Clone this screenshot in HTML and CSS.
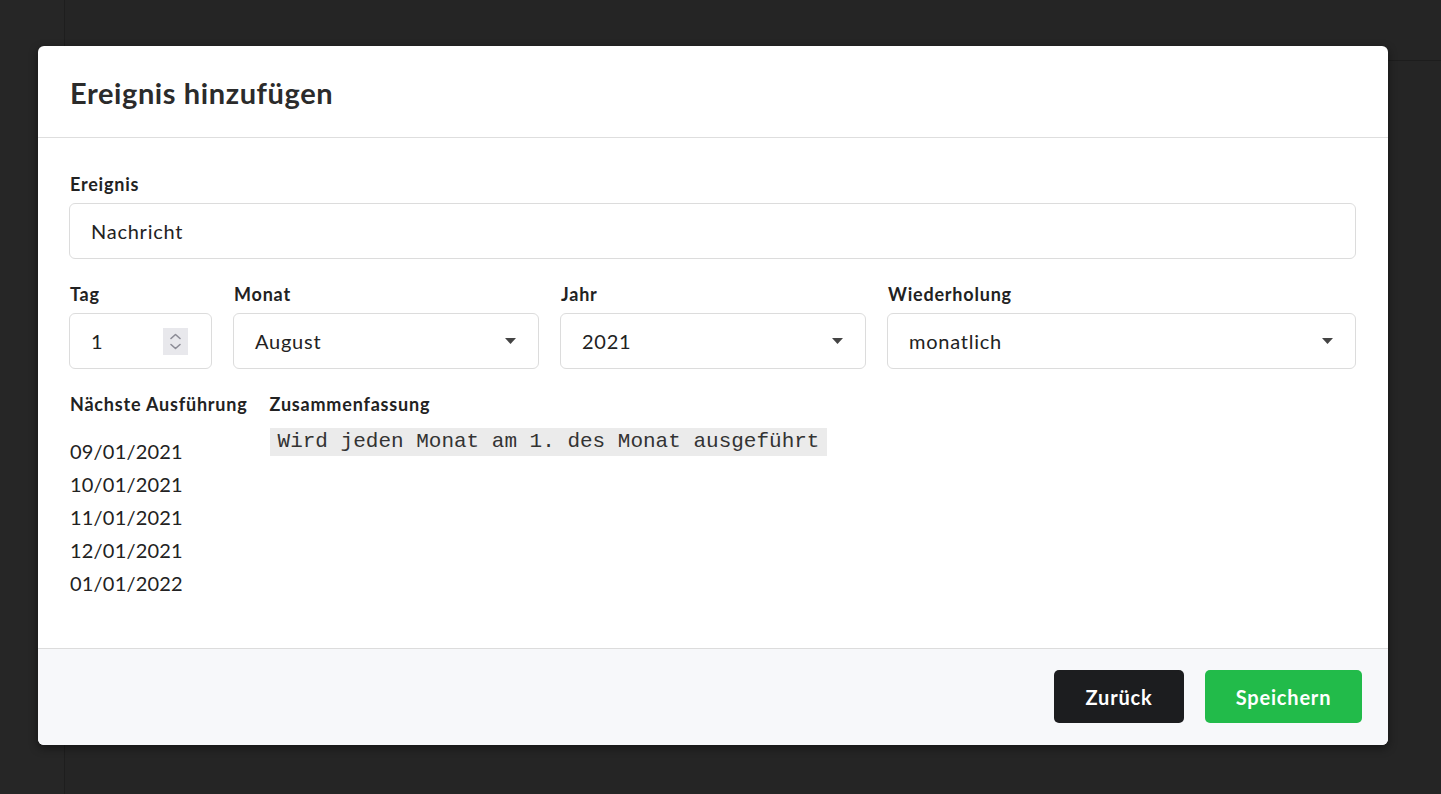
FILE: index.html
```html
<!DOCTYPE html>
<html lang="de">
<head>
<meta charset="utf-8">
<title>Ereignis hinzufügen</title>
<link rel="stylesheet" href="styles.css">
</head>
<body>
<div class="app">
  <aside class="sidebar"></aside>
  <main class="main">
    <div class="topbar"></div>
  </main>
</div>

<div class="modal">
  <header class="modal-header">
    <h1 class="modal-title">Ereignis hinzufügen</h1>
  </header>
  <section class="modal-body">
    <div class="field">
      <label class="label">Ereignis</label>
      <div class="input">Nachricht</div>
    </div>
    <div class="grid-row">
      <div class="field">
        <label class="label">Tag</label>
        <div class="input input-number">
          <span>1</span>
          <span class="spinner">
            <svg width="25" height="27" viewBox="0 0 25 27"><path d="M8 10.5 L12.5 6.5 L17 10.5" fill="none" stroke="#8c8c96" stroke-width="1.6" stroke-linecap="round" stroke-linejoin="round"/><path d="M8 16.5 L12.5 20.5 L17 16.5" fill="none" stroke="#8c8c96" stroke-width="1.6" stroke-linecap="round" stroke-linejoin="round"/></svg>
          </span>
        </div>
      </div>
      <div class="field">
        <label class="label">Monat</label>
        <div class="input select"><span>August</span><svg class="caret" width="11" height="6" viewBox="0 0 11 6"><path d="M0 0 H11 L5.5 6 Z" fill="#444"/></svg></div>
      </div>
      <div class="field">
        <label class="label">Jahr</label>
        <div class="input select"><span>2021</span><svg class="caret" width="11" height="6" viewBox="0 0 11 6"><path d="M0 0 H11 L5.5 6 Z" fill="#444"/></svg></div>
      </div>
      <div class="field">
        <label class="label">Wiederholung</label>
        <div class="input select"><span>monatlich</span><svg class="caret" width="11" height="6" viewBox="0 0 11 6"><path d="M0 0 H11 L5.5 6 Z" fill="#444"/></svg></div>
      </div>
    </div>
    <div class="info-row">
      <div class="info-col">
        <div class="label">Nächste Ausführung</div>
        <ul class="dates">
          <li>09/01/2021</li>
          <li>10/01/2021</li>
          <li>11/01/2021</li>
          <li>12/01/2021</li>
          <li>01/01/2022</li>
        </ul>
      </div>
      <div class="info-col">
        <div class="label">Zusammenfassung</div>
        <code class="summary">Wird jeden Monat am 1. des Monat ausgeführt</code>
      </div>
    </div>
  </section>
  <footer class="modal-footer">
    <button class="btn btn-dark">Zurück</button>
    <button class="btn btn-green">Speichern</button>
  </footer>
</div>
</body>
</html>
```

FILE: styles.css
```css
* { box-sizing: border-box; }

html, body {
  margin: 0;
  height: 100%;
}

body {
  background: #232323;
  font-family: Lato, "Noto Sans", sans-serif;
  color: #222;
  overflow: hidden;
}

.app {
  display: flex;
  height: 100vh;
}

.sidebar {
  width: 65px;
  background: #262626;
  border-right: 1px solid #1e1e1e;
}

.main {
  flex: 1;
  background: #252525;
}

.topbar {
  height: 61px;
  border-bottom: 1px solid #1d1d1d;
}

.modal {
  position: absolute;
  left: 38px;
  top: 46px;
  width: 1350px;
  background: #fff;
  border-radius: 6px;
  box-shadow: 0 3px 10px rgba(0, 0, 0, 0.45);
  overflow: hidden;
}

.modal-header {
  height: 92px;
  border-bottom: 1px solid #dedede;
  padding: 0 32px;
  display: flex;
  align-items: center;
}

.modal-title {
  margin: 0;
  margin-top: 2px;
  font-size: 29px;
  font-weight: 700;
  letter-spacing: 0.6px;
  color: #2b2b2b;
}

.modal-body {
  padding: 33px 32px 48px 31px;
  display: flex;
  flex-direction: column;
  gap: 22px;
}

.field {
  display: flex;
  flex-direction: column;
}

.label {
  font-size: 18px;
  font-weight: 700;
  letter-spacing: 0.8px;
  line-height: 27px;
  margin-bottom: 5px;
  padding-left: 1px;
  color: #222;
}

.input {
  height: 56px;
  border: 1px solid #dcdcdc;
  border-radius: 6px;
  padding: 0 22px 0 21px;
  font-size: 20px;
  letter-spacing: 0.75px;
  display: flex;
  align-items: center;
  color: #222;
}

.grid-row {
  display: grid;
  grid-template-columns: 143px 306px 306px 1fr;
  column-gap: 21px;
}

.input-number {
  justify-content: space-between;
  padding-right: 23px;
}

.spinner {
  width: 25px;
  height: 27px;
  background: #e8e8ec;
  display: flex;
}

.select {
  justify-content: space-between;
}

.caret {
  flex: none;
}

.info-row {
  display: flex;
  gap: 21px;
}

.info-col {
  display: flex;
  flex-direction: column;
}

.dates {
  list-style: none;
  margin: 12px 0 0;
  padding: 0 0 0 1px;
  font-size: 20px;
  letter-spacing: 0.2px;
  line-height: 33px;
}

.summary {
  align-self: flex-start;
  margin-top: 5px;
  margin-left: 1px;
  background: #ebebeb;
  font-family: "Liberation Mono", "Courier New", monospace;
  font-size: 21px;
  line-height: 28px;
  padding: 0 8px;
  color: #333;
}

.modal-footer {
  height: 97px;
  background: #f7f8fa;
  border-top: 1px solid #dcdcdc;
  display: flex;
  justify-content: flex-end;
  align-items: flex-start;
  gap: 21px;
  padding: 21px 26px 0 0;
}

.btn {
  height: 53px;
  border: none;
  border-radius: 5px;
  font-family: Lato, "Noto Sans", sans-serif;
  font-size: 20px;
  font-weight: 700;
  letter-spacing: 0.8px;
  color: #fff;
  padding: 0;
}

.btn-dark {
  width: 130px;
  background: #1c1d1f;
}

.btn-green {
  width: 157px;
  background: #22bb4a;
}
```
